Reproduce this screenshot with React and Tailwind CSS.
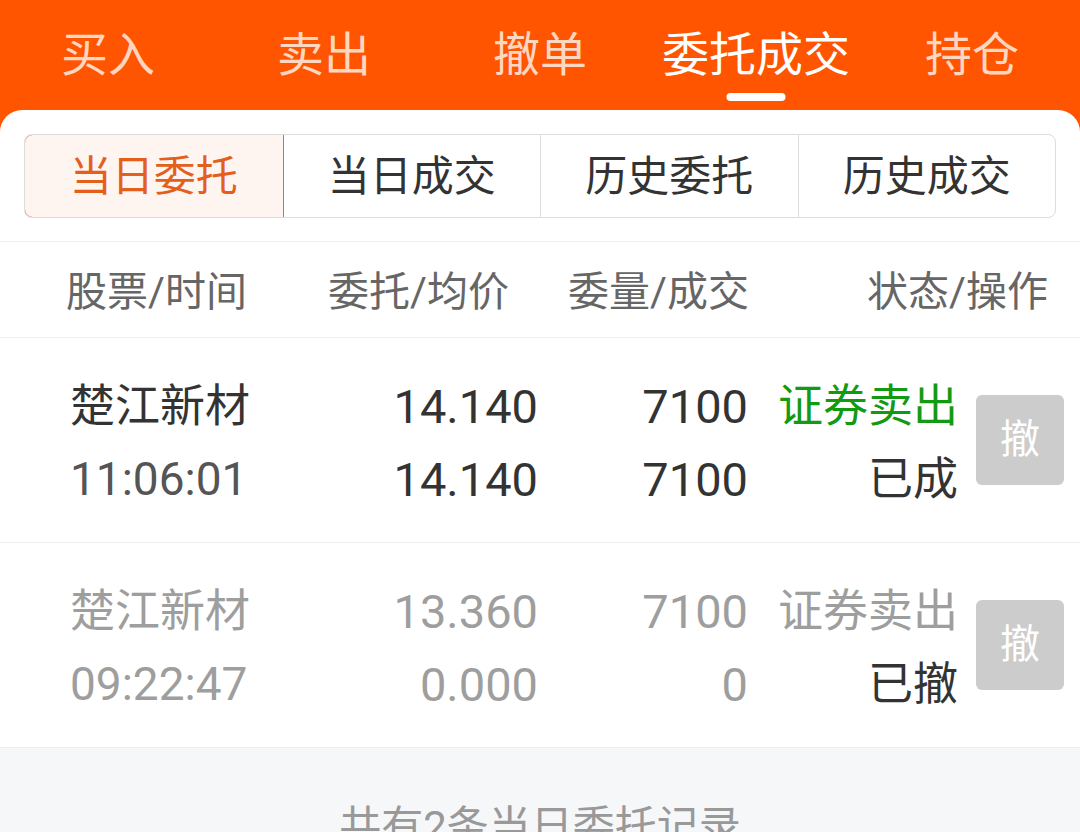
import { useState } from 'react';

const topTabs = ['买入', '卖出', '撤单', '委托成交', '持仓'];
const subTabs = ['当日委托', '当日成交', '历史委托', '历史成交'];

const orders = [
	{
		name: '楚江新材',
		time: '11:06:01',
		price: '14.140',
		avg: '14.140',
		qty: '7100',
		done: '7100',
		side: '证券卖出',
		status: '已成',
		active: true,
	},
	{
		name: '楚江新材',
		time: '09:22:47',
		price: '13.360',
		avg: '0.000',
		qty: '7100',
		done: '0',
		side: '证券卖出',
		status: '已撤',
		active: false,
	},
];

function OrderRow({ order }) {
	const main = order.active ? 'text-[#333333]' : 'text-[#9e9e9e]';
	const sub = order.active ? 'text-[#555555]' : 'text-[#9e9e9e]';
	return (
		<div className="shrink-0 flex items-center h-[205px] pt-[6px] pl-[70px] border-b border-[#eeeeee]">
			<div className="w-[250px] flex flex-col gap-[22px]">
				<span className={'leading-[51px] text-[45px] ' + main}>{order.name}</span>
				<span className={'leading-[51px] text-[46px] ' + sub}>{order.time}</span>
			</div>
			<div className={'w-[218px] flex flex-col gap-[22px] text-right text-[47px] ' + main}>
				<span className="leading-[51px]">{order.price}</span>
				<span className="leading-[51px]">{order.avg}</span>
			</div>
			<div className={'w-[210px] flex flex-col gap-[22px] text-right text-[47px] ' + main}>
				<span className="leading-[51px]">{order.qty}</span>
				<span className="leading-[51px]">{order.done}</span>
			</div>
			<div className="w-[210px] flex flex-col gap-[22px] text-right text-[45px]">
				<span
					className={
						'leading-[51px] ' +
						(order.active ? 'text-[#129a12]' : 'text-[#9e9e9e]')
					}
				>
					{order.side}
				</span>
				<span className="leading-[51px] text-[#333333]">
					{order.status}
				</span>
			</div>
			<button className="ml-[18px] -mt-[6px] w-[88px] h-[90px] rounded-[6px] bg-[#cccccc] text-white text-[40px] leading-none">
				撤
			</button>
		</div>
	);
}

export default function App() {
	const [tab, setTab] = useState(3);
	const [sub, setSub] = useState(0);

	return (
		<div
			className="w-[1080px] h-[832px] overflow-hidden bg-[#ff5500]"
			style={{ fontFamily: '"Roboto", "Noto Sans CJK SC", sans-serif' }}
		>
			<header className="grid grid-cols-5 h-[110px]">
				{topTabs.map((t, i) => (
					<button
						key={t}
						onClick={() => setTab(i)}
						className={
							'relative flex items-start justify-center pt-[26px] text-[47px] leading-[58px] ' +
							(tab === i ? 'text-white' : 'text-[#ffd6c0]')
						}
					>
						{t}
						{tab === i && (
							<span className="absolute left-1/2 -translate-x-1/2 top-[93px] w-[59px] h-[8px] rounded-full bg-white" />
						)}
					</button>
				))}
			</header>

			<div className="bg-white rounded-t-[22px] h-[722px] flex flex-col">
				<div className="shrink-0 px-[24px] pt-[24px] pb-[23px]">
					<div className="grid grid-cols-4 h-[84px] rounded-[8px] border border-[#dddddd] overflow-hidden">
						{subTabs.map((s, i) => (
							<button
								key={s}
								onClick={() => setSub(i)}
								className={
									'flex items-center justify-center text-[42px] ' +
									(i > 0 ? 'border-l border-[#dddddd] ' : '') +
									(sub === i
										? 'bg-[#fff5f0] text-[#e2601c] outline outline-1 outline-[#d2733c] rounded-l-[8px] relative z-10'
										: 'text-[#333333]')
								}
							>
								{s}
							</button>
						))}
					</div>
				</div>

				<div className="shrink-0 flex items-center h-[97px] pt-[6px] pl-[66px] border-t border-b border-[#f0f0f0] text-[41px] text-[#666666] whitespace-nowrap">
					<span className="w-[262px]">股票/时间</span>
					<span className="w-[240px]">委托/均价</span>
					<span className="w-[200px]">委量/成交</span>
					<span className="ml-auto pr-[32px]">状态/操作</span>
				</div>

				{orders.map((o, i) => (
					<OrderRow key={i} order={o} />
				))}

				<div className="flex-1 bg-[#f6f7f9] flex justify-center pt-[54px]">
					<span className="text-[42px] text-[#999999] leading-[50px]">
						共有2条当日委托记录
					</span>
				</div>
			</div>
		</div>
	);
}
